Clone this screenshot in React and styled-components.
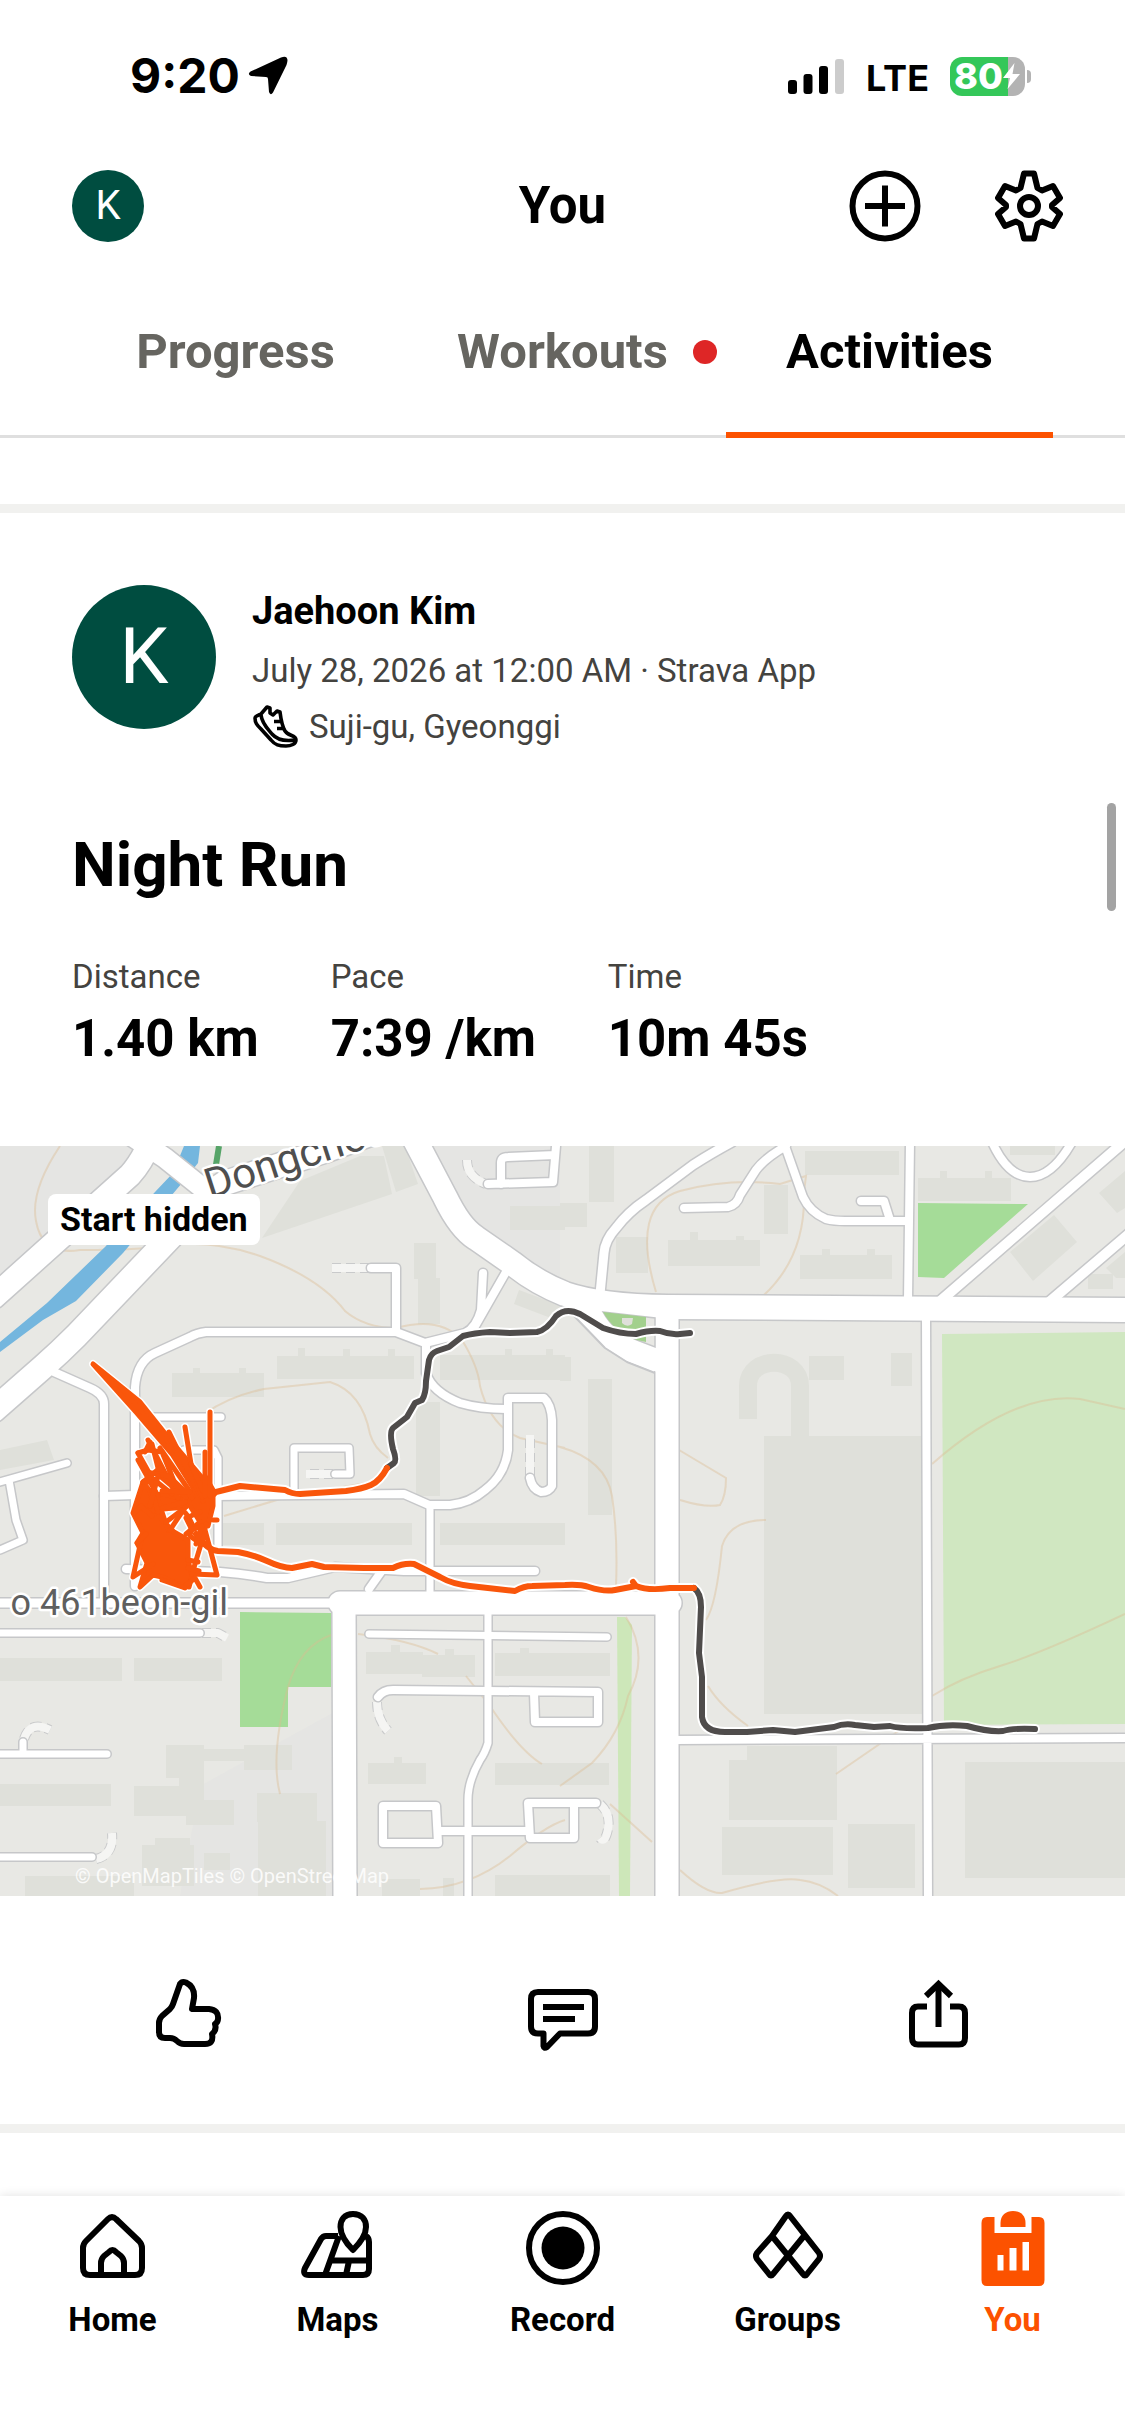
import React from "react";
import styled, { createGlobalStyle, css } from "styled-components";

const ORANGE = "#fc5200";

const GlobalStyle = createGlobalStyle`
  * {
    box-sizing: border-box;
  }
  body {
    margin: 0;
    background: #fff;
    color: #000;
    font-family: Roboto, "Liberation Sans", sans-serif;
  }
  h1, h2, h3, p, dl, dd, figure {
    margin: 0;
  }
  button {
    padding: 0;
    border: 0;
    background: none;
    color: inherit;
    font: inherit;
  }
  svg {
    display: block;
  }
`;

const Screen = styled.div`
  position: relative;
  display: flex;
  flex-direction: column;
  min-height: 100vh;
`;

const StatusBar = styled.div`
  display: flex;
  align-items: center;
  justify-content: space-between;
  height: 152px;
  padding: 0 100px 0 130px;
  font-family: Inter, sans-serif;
`;

const StatusGroup = styled.div`
  display: flex;
  align-items: center;
  gap: ${(props) => props.$gap}px;
`;

const Clock = styled.span`
  font-size: 48px;
  font-weight: 700;
  line-height: 48px;
`;

const Network = styled.span`
  padding-top: 4px;
  font-size: 36px;
  font-weight: 700;
`;

const Battery = styled.div`
  position: relative;
  display: flex;
  align-items: center;
  width: 75px;
  height: 39px;
  padding-left: 4px;
  border-radius: 12px;
  background: linear-gradient(90deg, #34c759 78%, #b3b3b3 78%);
  color: #fff;
  font-size: 36px;
  font-weight: 800;
  &::after {
    content: "";
    position: absolute;
    right: -6px;
    top: 13px;
    width: 4px;
    height: 13px;
    border-radius: 0 4px 4px 0;
    background: #b3b3b3;
  }
`;

const Header = styled.header`
  display: grid;
  grid-template-columns: 1fr auto 1fr;
  align-items: center;
  height: 108px;
  padding: 0 60px;
`;

const HeaderProfile = styled.div`
  padding-left: 12px;
`;

const Title = styled.h1`
  font-size: 51px;
  line-height: 56px;
`;

const HeaderActions = styled.div`
  display: flex;
  justify-content: flex-end;
  gap: 72px;
`;

const Avatar = styled.span`
  display: flex;
  flex-shrink: 0;
  align-items: center;
  justify-content: center;
  width: ${(props) => (props.$large ? 144 : 72)}px;
  height: ${(props) => (props.$large ? 144 : 72)}px;
  border-radius: 50%;
  background: #004d40;
  color: #fff;
  font-size: ${(props) => (props.$large ? 78 : 40)}px;
  line-height: 1;
`;

const Tabs = styled.nav`
  display: flex;
  height: 178px;
  padding: 0 72px;
  border-bottom: 3px solid #dfdfdf;
`;

const Tab = styled.button`
  position: relative;
  flex: 1;
  height: 178px;
  padding-top: 10px;
  border-bottom: 6px solid transparent;
  color: #666560;
  font-size: 49px;
  font-weight: 700;
  ${(props) =>
    props.$active &&
    css`
      border-color: ${ORANGE};
      color: #000;
    `}
`;

const Dot = styled.span`
  position: absolute;
  right: 9px;
  top: 80px;
  width: 24px;
  height: 24px;
  border-radius: 50%;
  background: #de2626;
`;

const Feed = styled.main`
  flex: 1;
  padding-top: 66px;
`;

const Card = styled.article`
  border-top: 9px solid #f1f1ef;
  border-bottom: 9px solid #f1f1ef;
`;

const CardBody = styled.div`
  padding: 72px 72px 75px;
`;

const Athlete = styled.div`
  display: flex;
  gap: 36px;
`;

const Name = styled.h2`
  margin-bottom: 6px;
  font-size: 38px;
  line-height: 52px;
`;

const Meta = styled.p`
  display: flex;
  align-items: center;
  gap: 10px;
  color: #44433f;
  font-size: 33px;
  line-height: 56px;
`;

const ActivityName = styled.h3`
  margin: 70px 0 50px;
  font-size: 62px;
  line-height: 80px;
`;

const Stats = styled.dl`
  display: flex;
  gap: 72px;
`;

const StatLabel = styled.dt`
  color: #44433f;
  font-size: 33px;
  line-height: 44px;
`;

const StatValue = styled.dd`
  padding-top: 8px;
  font-size: 51px;
  font-weight: 700;
  line-height: 64px;
`;

const MapFigure = styled.figure`
  position: relative;
  svg {
    width: 100%;
    height: auto;
  }
`;

const MapBadge = styled.figcaption`
  position: absolute;
  left: 48px;
  top: 48px;
  padding: 0 12px;
  border-radius: 8px;
  background: #fff;
  font-size: 34px;
  font-weight: 700;
  line-height: 51px;
`;

const Actions = styled.div`
  display: grid;
  grid-template-columns: repeat(3, 1fr);
  height: 228px;
`;

const IconButton = styled.button`
  display: flex;
  align-items: center;
  justify-content: center;
`;

const ActionButton = styled(IconButton)`
  padding-top: 8px;
`;

const ScrollThumb = styled.div`
  position: absolute;
  right: 9px;
  top: 803px;
  width: 9px;
  height: 108px;
  border-radius: 5px;
  background: #a3a3a3;
`;

const TabBar = styled.nav`
  display: grid;
  grid-template-columns: repeat(5, 1fr);
  height: 240px;
  padding-top: 15px;
  background: #fff;
  box-shadow: 0 0 10px rgba(0, 0, 0, 0.12);
`;

const TabLink = styled.a`
  display: flex;
  flex-direction: column;
  align-items: center;
  gap: 11px;
  color: ${(props) => (props.$active ? ORANGE : "#000")};
  font-size: 33px;
  font-weight: 700;
  line-height: 44px;
  text-decoration: none;
`;

const Icon = ({ children, width = 72, height = 72 }) => (
  <svg
    width={width}
    height={height}
    viewBox={`0 0 ${width} ${height}`}
    fill="none"
    stroke="currentColor"
    strokeWidth="6"
    strokeLinejoin="round"
    overflow="visible"
    aria-hidden="true"
  >
    {children}
  </svg>
);

const ShoeIcon = () => (
  <svg
    width="47"
    height="48"
    viewBox="0 0 47 48"
    fill="none"
    stroke="#000"
    strokeWidth="3.6"
    strokeLinejoin="round"
    aria-hidden="true"
  >
    <path d="M3 15C3 13 7 12 9 11L15 4L18 5V10L21 12L25 8L28 9C29 17 30 23 33 28C36 33 44 32 44 37C44 41 39 43 34 43C27 43 23 42 19 37L9 26C5 22 3 20 3 15Z" />
    <path d="M9 12C10 21 16 26 20 31C26 38 36 38 43 37M22 18.500H30M25 25.500H33" />
  </svg>
);

const TAB_ITEMS = [
  {
    label: "Home",
    icon: (
      <>
        <path d="M31 8Q35 4 39 8L62 30Q65 33 65 37V57Q65 64 58 64H13Q6 64 6 57V37Q6 33 9 30Z" />
        <path d="M24 64V52Q24 48 27 45L32 41Q35.500 37 39 41L44 45Q47 48 47 52V64" />
      </>
    ),
  },
  {
    label: "Maps",
    icon: (
      <>
        <path d="M36 25H24Q21 25 19 28L3 57Q0 64 7 64H61Q67 64 67 58V31Q67 27 64 25" />
        <path d="M37 25L23 64M27 49.500H67M47 50L44 64" />
        <path
          d="M51 3C42 3 38.500 9 38.500 16C38.500 24 45 33 51 39C57 33 64 24 64 16C64 9 60 3 51 3Z"
          fill="#fff"
        />
      </>
    ),
  },
  {
    label: "Record",
    icon: (
      <>
        <circle cx="36" cy="37" r="34" />
        <circle cx="36" cy="37" r="21.500" fill="currentColor" stroke="none" />
      </>
    ),
  },
  {
    label: "Groups",
    icon: (
      <path d="M20 25L34 5Q36 2 38 5L67 42Q69 45 67 48L55 63Q53 66 51 63L20 25M52 25L21 63Q19 66 17 63L5 48Q3 45 5 42L20 25" />
    ),
  },
  {
    label: "You",
    active: true,
    icon: (
      <g fill="currentColor" stroke="none">
        <path d="M23.500 16V12C23.500 4 29 0 36 0S48.500 4 48.500 12V16Z" />
        <path
          fillRule="evenodd"
          d="M10 6H17.500V22H54.500V6H62Q67.500 6 67.500 12V69Q67.500 75 62 75H10Q4.500 75 4.500 69V12Q4.500 6 10 6ZM20.500 44V59.500H26.500V44ZM32.500 37V59.500H39.500V37ZM45.500 31V59.500H52V31Z"
        />
      </g>
    ),
  },
];

const STATS = [
  { label: "Distance", value: "1.40 km" },
  { label: "Pace", value: "7:39 /km" },
  { label: "Time", value: "10m 45s" },
];

// [width, path]
const ROADS = [
  [7, "M9 334L16 374L23 394L0 404M0 336L67 317"],
  [8, "M54 226L90 242Q104 248 104 258V452"],
  [8, "M135 440V241Q137 215 155 207L190 191Q197 187 206 186H396L425 197L465 187Q476 182 481 164L483 127M474 182L506 126"],
  [7, "M150 271H221M184 304H214L218 312V404"],
  [8, "M104 350L135 349M216 350L404 348L429 359H450Q470 357 485 344Q505 329 508 304V252H544Q551 258 552 274V340Q549 346 541 346Q532 343 530 332"],
  [8, "M426 197V227Q432 246 460 257Q480 263 506 263"],
  [8, "M396 184V122H371"],
  [7, "M294 346V302H349L350 328H335"],
  [7, "M430 359V446"],
  [8, "M126 423L220 426Q245 428 267 432H288L335 421L404 425H535M381 426L369 443"],
  [9, "M0 457H345"],
  [7, "M0 487H200M0 608H107M23 604V596M0 711H92"],
  [7, "M369 488L607 491"],
  [7, "M488 459V597Q485 607 480 614Q468 635 468 654V750"],
  [8, "M378 551Q383 544 393 544L598 546V576H535L534 547"],
  [8, "M383 660H436L438 697H383ZM440 685H528M596 657H528L530 692H574V659"],
  [8, "M488 38L553 36L556 0M501 38V17Q501 11 508 11L555 9"],
  [9, "M732 -4Q710 8 693 19L646 54Q628 66 616 82Q605 94 604 107L600 148"],
  [8, "M684 62L728 61Q737 59 740 49L756 24Q765 12 786 0M785 0L803 51Q810 66 826 73Q834 75 845 75H906M861 55H884L890 74"],
  [8, "M910 -4L908 154M992 -4Q1008 31 1030 31T1072 -4"],
  [10, "M1124 -4L938 157M1130 87L1048 157"],
  [8, "M926 170L928 754M675 594L1129 592"],
  [20, "M120 -18L165 12L205 44"],
  [23, "M-6 151L130 29Q142 16 152 -8"],
  [24, "M-6 264L43 221Q60 206 76 190L203 57Q212 45 225 37L324 5L370 -12"],
  [24, "M414 -8L445 51Q460 82 476 92L512 117Q535 136 565 148Q600 160 668 161L1129 164"],
  [23, "M667 164V754M340 457H670M344 457L345 754"],
];

const DASHED_ROADS =
  "M530 330V289M369 122H332M333 328H306M202 487H218L227 492M24 593Q30 574 50 584M96 713Q114 709 112 687M377 556Q377 573 388 585M600 658Q611 668 608 683T600 692M467 14Q467 31 486 38";

const BUILDINGS = [
  [172, 227, 92, 24], [193, 222, 7, 6], [239, 222, 7, 6],
  [277, 210, 137, 23], [298, 202, 7, 8], [343, 203, 7, 7], [388, 203, 7, 7],
  [440, 209, 125, 25], [505, 203, 7, 7], [546, 203, 7, 7],
  [414, 97, 22, 36], [418, 132, 22, 46], [416, 256, 24, 94], [510, 60, 55, 24],
  [589, 0, 25, 56], [560, 57, 27, 24], [616, 91, 32, 36],
  [668, 94, 92, 26], [690, 86, 8, 8], [736, 90, 8, 8],
  [764, 39, 24, 49], [805, 5, 94, 24], [918, 32, 93, 23], [940, 25, 7, 8], [985, 25, 7, 8],
  [800, 109, 92, 24], [822, 103, 8, 8], [867, 103, 8, 8], [1010, 0, 45, 9],
  [1088, 128, 25, 15], [809, 210, 35, 24], [891, 207, 21, 33], [764, 290, 158, 278],
  [588, 233, 24, 136], [560, 211, 11, 24],
  [729, 614, 108, 60], [747, 600, 90, 14], [722, 681, 111, 48], [848, 678, 67, 64], [965, 616, 160, 116],
  [560, 507, 50, 23], [560, 617, 49, 22], [560, 729, 50, 21],
  [0, 512, 122, 23], [134, 512, 88, 23], [0, 638, 111, 22],
  [222, 377, 42, 22], [276, 377, 136, 22], [440, 377, 125, 22],
  [366, 506, 57, 22], [422, 509, 53, 22], [495, 507, 65, 23], [391, 499, 9, 8], [445, 503, 9, 7], [520, 502, 9, 6],
  [368, 617, 58, 21], [394, 611, 8, 7], [495, 617, 65, 22], [495, 729, 65, 21], [382, 733, 38, 17], [443, 732, 11, 18],
  [166, 599, 38, 33], [179, 630, 25, 40], [134, 640, 46, 30], [244, 599, 48, 25],
  [204, 603, 41, 12], [186, 654, 48, 25], [257, 647, 60, 29], [258, 675, 68, 75],
  [142, 699, 52, 41], [155, 692, 35, 12], [204, 707, 26, 17], [25, 730, 109, 20],
];

const CONTOURS =
  "M60 0Q30 45 36 75Q42 110 80 104Q150 104 180 98Q220 96 260 110Q320 132 345 165Q365 182 396 182Q440 170 462 194Q478 220 480 240Q490 280 520 292L565 302" +
  "M204 268Q230 250 264 243L330 236Q362 246 370 288Q374 302 388 312M224 370L290 350L384 334" +
  "M656 146Q630 60 680 45Q730 32 780 38L806 30L804 46Q806 110 764 149M560 301Q606 314 612 350Q618 390 616 440" +
  "M932 318Q1015 245 1080 253L1125 263M932 550Q960 532 1000 520T1125 468M679 304L726 332Q726 350 720 359Q706 362 680 354M766 374Q730 374 722 400Q716 460 706 474M708 540Q720 560 748 580" +
  "M836 628L900 584M680 724Q706 748 722 747Q780 730 800 734Q820 736 838 750M626 471Q650 510 628 550Q620 588 592 617L560 640" +
  "M331 489Q300 500 288 541Q270 610 280 648M358 488Q410 494 438 508M466 530L490 560Q520 605 542 618M420 743Q470 742 510 710Q545 680 565 674M610 658L652 696";

const ORANGE_ROUTE =
  "M210 352L216 346L240 340L285 344Q292 348 300 348L346 345Q362 343 371 339Q380 335 387 322M196 388Q207 404 218 405L238 406Q254 409 267 415Q282 422 292 422L312 418L324 421L364 422L393 422Q403 417 414 418Q422 422 440 431Q452 438 470 440L515 445Q524 440 532 440L565 439Q580 438 589 441Q604 446 615 444L636 440L633 436L636 440Q648 445 670 442L694 442";

const DARK_ROUTE =
  "M387 322L394 317Q397 314 393 303Q389 286 393 282L407 271L415 257L422 254Q426 248 426 235L429 214Q431 207 437 205L449 201L463 190Q474 187 490 186L510 187L537 186Q547 184 556 170Q566 161 580 168L603 182Q620 188 636 188Q650 184 660 185Q670 189 680 188L690 187" +
  "M694 442Q701 447 701 461L699 507L702 531V571Q704 586 725 586L747 586L773 584L795 586L834 581Q844 577 855 579L874 581L890 580Q900 583 928 582Q945 578 967 580Q988 586 1003 585Q1012 582 1035 583";

const SCRIBBLE =
  "M93 218L136 266L172 308L195 345L203 351L205 335L172 296L140 256Z" +
  "M148 350L163 348L180 352L186 361L163 363L152 345Z" +
  "M197 340L205 330L213 344L213 360L208 380L202 379L190 360L188 352Z" +
  "M143 336L150 345L153 360L164 376L174 386L188 394V414L192 430L189 441L180 439L162 431L153 429L140 441L147 417L137 397L143 387L133 367Z" +
  "M148 294L178 352M169 286L203 355M185 281L191 318L202 351M191 318L203 345M210 266V350M205 306V350M160 302L193 350" +
  "M138 307L148 304L162 306L176 340M138 307L152 332L172 348M138 314L158 350M150 296L145 306M152 298L160 330L186 352M166 312L172 333L192 352" +
  "M143 336L160 322L180 344M146 326L168 330L186 352M143 336H152L168 384M152 345L158 366M158 330L150 360M162 345L190 346" +
  "M141 395L133 431L153 418M205 384L217 429L192 428L204 388M134 367L141 360L152 370M137 397L146 388" +
  "M170 384L186 360M166 376L182 364Q188 368 192 378L190 390L201 398L206 378M186 388L200 376M163 362L185 356M213 374H217M196 398L202 380L192 384L186 372L200 366" +
  "M188 414L198 416M188 422L199 425M184 441L195 432L200 441M162 434L185 442";

const RouteMap = () => (
  <svg viewBox="0 0 1125 750" role="img" aria-label="Route map">
    <rect width="1125" height="750" fill="#e8e8e4" />
    <path d="M0 0H150L0 140ZM420 0H560V150L500 110ZM200 640L345 560V750H180Z" fill="#e5e5e3" />
    <g fill="#dfe0da">
      {BUILDINGS.map(([x, y, w, h]) => (
        <rect key={`${x}-${y}`} x={x} y={y} width={w} height={h} />
      ))}
      <path d="M262 92L392 48L384 10L360 10L300 35ZM396 46L418 38L405 0H382ZM0 304L47 294L54 314L0 324ZM519 144L562 160L556 174L514 158ZM1010 106L1054 69L1077 96L1033 135ZM1099 47L1125 25V62L1117 67ZM1106 122L1125 106V132H1116Z" />
    </g>
    <path d="M748 273V240C748 209 800 209 800 240V291" fill="none" stroke="#dfe0da" strokeWidth="18" />
    <path d="M918 57L1028 58L944 132L918 131ZM240 466L331 467V541H288V581H240Z" fill="#a5dc98" />
    <path d="M942 188L1125 186V578L944 579Z" fill="#d0e7c1" />
    <path d="M617 471H625L632 479L630 750H619Z" fill="#cde7b9" />
    <path d={CONTOURS} fill="none" stroke="#dcbb90" strokeWidth="2" opacity="0.4" />
    <path d="M184 0H200L198 17L182 37L123 107L76 155L43 174L0 206V196L47 157L105 101L155 46L173 27Z" fill="#74b6de" />
    <path d="M219 0L215 25" stroke="#56a468" strokeWidth="6" />

    <g fill="none" strokeLinecap="round" strokeLinejoin="round">
      <path d={DASHED_ROADS} stroke="#c9cacb" strokeWidth="10" strokeDasharray="9 5" strokeLinecap="butt" />
      <path d={DASHED_ROADS} stroke="#f5f5f3" strokeWidth="8" strokeLinecap="butt" />
      {ROADS.map(([width, d]) => (
        <path key={d} d={d} stroke="#c6c7c9" strokeWidth={width + 3} />
      ))}
      <path d="M560 155L576 172L605 202L627 216L655 227V170L603 160Z" fill="#fff" stroke="#c6c7c9" strokeWidth="2" />
      {ROADS.map(([width, d]) => (
        <path key={d} d={d} stroke="#fff" strokeWidth={width} />
      ))}
    </g>
    <path d="M562 150L578 171L606 201L628 215L657 226V160Z" fill="#fff" />
    <path d="M603 166L655 172V201L637 194Q614 186 603 166Z" fill="#e8e8e4" stroke="#c6c7c9" strokeWidth="1.5" />
    <path d="M603 166L646 171V196L637 194Q614 186 603 166Z" fill="#a2d08d" />
    <path d="M622 172H633L632 178Q627 182 622 177Z" fill="#dfe0da" />

    <g paintOrder="stroke" stroke="#fff" strokeWidth="5" strokeLinejoin="round">
      <text x="210" y="53" fontSize="42" fill="#4f4f4f" transform="rotate(-18 210 53)">
        Dongcheo
      </text>
      <text x="228" y="469" fontSize="36" fill="#5f5f5f" textAnchor="end">
        o 461beon-gil
      </text>
    </g>

    <g fill="none" strokeLinecap="round" strokeLinejoin="round">
      <path d={DARK_ROUTE} stroke="#fff" strokeWidth="10" />
      <path d={ORANGE_ROUTE} stroke="#fff" strokeWidth="10" />
      <path d={SCRIBBLE} stroke="#fff" strokeWidth="8" />
      <path d={DARK_ROUTE} stroke="#4f4c4b" strokeWidth="6" />
      <path d={ORANGE_ROUTE} stroke="#f9560b" strokeWidth="6" />
      {SCRIBBLE.split("M")
        .filter(Boolean)
        .map((d) => (
          <path
            key={d}
            d={`M${d}`}
            stroke="#f9560b"
            strokeWidth="5"
            fill={d.endsWith("Z") ? "#f9560b" : "none"}
          />
        ))}
    </g>

    <text x="75" y="737" fontSize="20" fill="#fff" opacity="0.85">
      © OpenMapTiles © OpenStreetMap
    </text>
  </svg>
);

const App = () => (
  <>
    <GlobalStyle />
    <Screen>
      <StatusBar>
        <StatusGroup $gap={8}>
          <Clock>9:20</Clock>
          <svg width="40" height="40" viewBox="0 0 40 40" aria-hidden="true">
            <path d="M33 1.500Q39 -1 39.500 4Q39.500 6 38.500 9L25 36.500Q22.500 40 21 36L20 23Q20 21 18 21L3 20Q-1 18 2.500 15.500Z" />
          </svg>
        </StatusGroup>
        <StatusGroup $gap={21}>
          <svg width="57" height="36" viewBox="0 0 57 36" aria-hidden="true">
            <rect x="0" y="22" width="9" height="14" rx="3" />
            <rect x="15.500" y="16" width="9" height="20" rx="3" />
            <rect x="31" y="8" width="9" height="28" rx="3" />
            <rect x="47" y="1" width="9" height="35" rx="3" fill="#ccc" />
          </svg>
          <Network>LTE</Network>
          <Battery>
            80
            <svg width="17" height="26" viewBox="0 0 17 26" fill="#fff" aria-hidden="true">
              <path d="M11.500 0L0 15H7L4.500 26L17 11H9.500Z" />
            </svg>
          </Battery>
        </StatusGroup>
      </StatusBar>

      <Header>
        <HeaderProfile>
          <Avatar>K</Avatar>
        </HeaderProfile>
        <Title>You</Title>
        <HeaderActions>
          <IconButton aria-label="Add">
            <Icon>
              <circle cx="36" cy="36" r="32.500" />
              <path d="M16 36H56M36 15.500V56.500" />
            </Icon>
          </IconButton>
          <IconButton aria-label="Settings">
            <Icon>
              <path d="M31 3.500H41L44.500 18L49 20.500L60 16L67 28L59 35V37L67 44L60 56L49 51.500L44.500 54L41 68.500H31L27.500 54L23 51.500L12 56L5 44L13 37V35L5 28L12 16L23 20.500L27.500 18Z" />
              <circle cx="36" cy="36" r="9" />
            </Icon>
          </IconButton>
        </HeaderActions>
      </Header>

      <Tabs>
        <Tab>Progress</Tab>
        <Tab>
          Workouts
          <Dot />
        </Tab>
        <Tab $active>Activities</Tab>
      </Tabs>

      <Feed>
        <Card>
          <CardBody>
            <Athlete>
              <Avatar $large>K</Avatar>
              <div>
                <Name>Jaehoon Kim</Name>
                <Meta>July 28, 2026 at 12:00 AM · Strava App</Meta>
                <Meta>
                  <ShoeIcon />
                  Suji-gu, Gyeonggi
                </Meta>
              </div>
            </Athlete>
            <ActivityName>Night Run</ActivityName>
            <Stats>
              {STATS.map(({ label, value }) => (
                <div key={label}>
                  <StatLabel>{label}</StatLabel>
                  <StatValue>{value}</StatValue>
                </div>
              ))}
            </Stats>
          </CardBody>
          <MapFigure>
            <RouteMap />
            <MapBadge>Start hidden</MapBadge>
          </MapFigure>
          <Actions>
            <ActionButton aria-label="Give kudos">
              <Icon>
                <path d="M28 6Q30 3 34 4.500Q43 9 42 20L40 31H57Q67 32 66 41Q66 44 63 46Q65 52 60 56Q62 66 53 66H32Q28 66 25 63Q22 60 18 60H13Q7 60 7 54V45Q7 41 10 38L18 31Q20 29 21 26Z" />
              </Icon>
            </ActionButton>
            <ActionButton aria-label="Comment">
              <Icon>
                <path d="M33 55.500H61Q68 55.500 68 48.500V21Q68 14 61 14H11Q4 14 4 21V48.500Q4 55.500 11 55.500H16.500V68Q17 71 20 69Z" />
                <path d="M16 29H57M16 41H48" />
              </Icon>
            </ActionButton>
            <ActionButton aria-label="Share">
              <Icon>
                <path d="M25 28.500H16Q10 28.500 10 35V60Q10 66.500 16 66.500H57Q63 66.500 63 60V35Q63 28.500 57 28.500H48M36.500 5V49" />
                <path d="M24 18L36.500 6L49 18" strokeLinejoin="miter" />
              </Icon>
            </ActionButton>
          </Actions>
        </Card>
      </Feed>

      <TabBar>
        {TAB_ITEMS.map(({ label, icon, active }) => (
          <TabLink key={label} href={`#${label.toLowerCase()}`} $active={active}>
            <Icon height={76}>{icon}</Icon>
            {label}
          </TabLink>
        ))}
      </TabBar>
      <ScrollThumb />
    </Screen>
  </>
);

export default App;
